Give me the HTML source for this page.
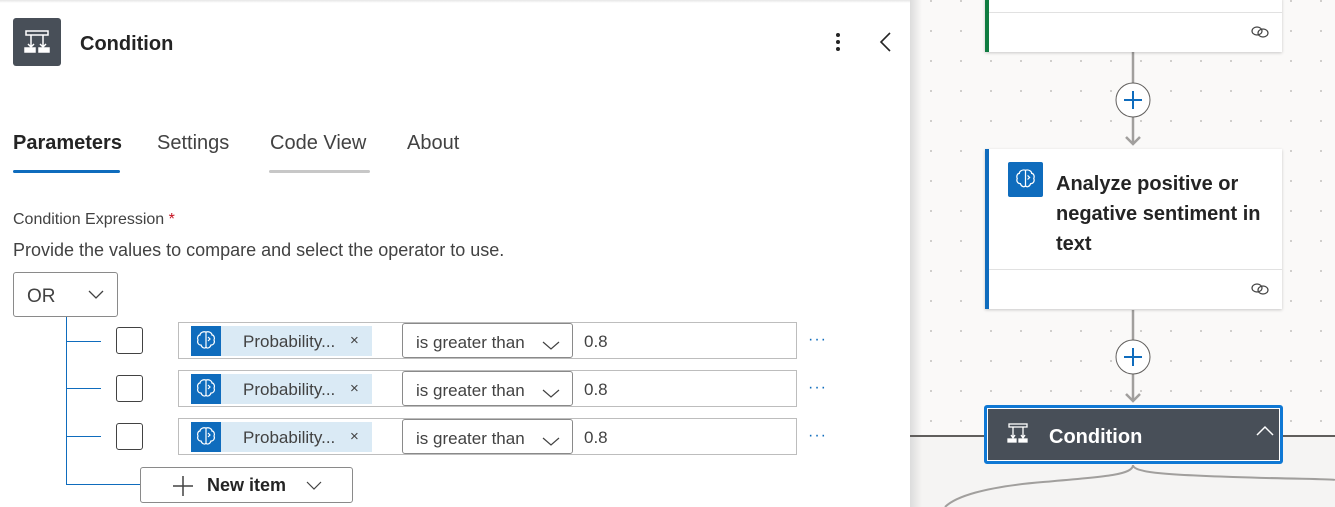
<!DOCTYPE html>
<html><head><meta charset="utf-8"><style>
*{box-sizing:border-box;margin:0;padding:0}
body{width:1335px;height:507px;overflow:hidden;position:relative;background:#fff;font-family:"Segoe UI","Liberation Sans",sans-serif;color:#242424}
.a{position:absolute}
.t{white-space:nowrap}
.row{position:absolute;left:178px;width:619px;height:37px;border:1px solid #bdbdbd;background:#fff}
.tok{position:absolute;left:12px;top:3px;width:181px;height:30px;background:#daeaf5}
.tok .ic{position:absolute;left:0;top:0;width:30px;height:30px;background:#0f6cbd}
.tok span{position:absolute;left:52px;top:6px;font-size:17px;color:#424242}
.tok b{position:absolute;left:159px;top:6px;font-weight:normal;font-size:15px;color:#424242}
.op{position:absolute;left:223px;top:0;width:171px;height:35px;border:1px solid #8a8a8a;border-radius:3px;background:#fff}
.op span{position:absolute;left:13px;top:9px;font-size:17px;color:#424242}
.val{position:absolute;left:405px;top:9px;font-size:17px;color:#424242}
.cb{position:absolute;left:116px;width:27px;height:27px;border:1px solid #424242;border-radius:3px}
.hl{position:absolute;left:66px;width:35px;height:1px;background:#0f6cbd}
.dots{position:absolute;left:808px;font-size:16px;color:#0f6cbd;letter-spacing:1px}
</style></head><body>
<div class="a" style="left:0;top:0;width:910px;height:3px;background:linear-gradient(#e6e6e6,#fff)"></div>
<div class="a" style="left:13px;top:18px;width:48px;height:48px;background:#484f58;border-radius:3px">
<svg width="48" height="48" viewBox="0 0 48 48" fill="none" stroke="#fff" stroke-width="1.5"><rect x="13" y="13" width="22" height="4"/><path d="M18 17v12M15 26l3 3 3-3M30 17v12M27 26l3 3 3-3"/><rect x="12" y="30" width="10" height="4" fill="#fff"/><rect x="26" y="30" width="10" height="4" fill="#fff"/></svg></div>
<div class="a t" style="left:80px;top:33px;font-size:20px;font-weight:600">Condition</div>
<div class="a" style="left:836px;top:33px;width:4px;height:20px"><div style="width:4px;height:4px;background:#242424;border-radius:2px;margin-bottom:3px"></div><div style="width:4px;height:4px;background:#242424;border-radius:2px;margin-bottom:3px"></div><div style="width:4px;height:4px;background:#242424;border-radius:2px"></div></div>
<svg class="a" style="left:876px;top:30px" width="20" height="24"><path d="M14 3L5 12l9 9" fill="none" stroke="#242424" stroke-width="1.6"/></svg>
<div class="a t" style="left:13px;top:132px;font-size:20px;font-weight:600">Parameters</div>
<div class="a" style="left:13px;top:170px;width:107px;height:3px;background:#0f6cbd;border-radius:2px"></div>
<div class="a t" style="left:157px;top:132px;font-size:20px;color:#424242">Settings</div>
<div class="a t" style="left:270px;top:132px;font-size:20px;color:#424242">Code View</div>
<div class="a" style="left:269px;top:170px;width:101px;height:3px;background:#c7c7c7;border-radius:2px"></div>
<div class="a t" style="left:407px;top:132px;font-size:20px;color:#424242">About</div>
<div class="a t" style="left:13px;top:211px;font-size:16px;color:#424242">Condition Expression <span style="color:#c50f1f">*</span></div>
<div class="a t" style="left:13px;top:240px;font-size:18px;color:#424242">Provide the values to compare and select the operator to use.</div>
<div class="a" style="left:13px;top:272px;width:105px;height:45px;border:1px solid #8a8a8a;border-radius:3px"><span class="a t" style="left:13px;top:13px;font-size:19px;color:#424242">OR</span>
<svg class="a" style="left:73px;top:16px" width="18" height="12"><path d="M2 2l7 7 7-7" fill="none" stroke="#424242" stroke-width="1.3"/></svg></div>
<div class="a" style="left:66px;top:317px;width:1px;height:168px;background:#0f6cbd"></div>
<div class="hl" style="top:341px"></div><div class="hl" style="top:388px"></div><div class="hl" style="top:436px"></div>
<div class="a" style="left:66px;top:484px;width:74px;height:1px;background:#0f6cbd"></div>
<div class="cb" style="top:327px"></div><div class="cb" style="top:375px"></div><div class="cb" style="top:423px"></div>
<svg width="0" height="0" style="position:absolute"><defs><g id="br" fill="none" stroke="#fff" stroke-width="1.2"><path d="M15 6c-3-1-6 1-6 3-2 0-3 3-2 5-1 2 0 5 3 5 1 3 4 4 5 2zM15 6c3-1 6 1 6 3 2 0 3 3 2 5 1 2 0 5-3 5-1 3-4 4-5 2M15 6v15M17 11l2 2-2 2"/></g></defs></svg>
<div class="row" style="top:322px"><div class="tok"><div class="ic"><svg width="30" height="30"><use href="#br"/></svg></div><span class="t">Probability...</span><b>×</b></div><div class="op"><span class="t">is greater than</span><svg class="a" style="left:138px;top:15px" width="20" height="12"><path d="M2 3l8 7 8-7" fill="none" stroke="#424242" stroke-width="1.2"/></svg></div><span class="val t">0.8</span></div>
<div class="row" style="top:370px"><div class="tok"><div class="ic"><svg width="30" height="30"><use href="#br"/></svg></div><span class="t">Probability...</span><b>×</b></div><div class="op"><span class="t">is greater than</span><svg class="a" style="left:138px;top:15px" width="20" height="12"><path d="M2 3l8 7 8-7" fill="none" stroke="#424242" stroke-width="1.2"/></svg></div><span class="val t">0.8</span></div>
<div class="row" style="top:418px"><div class="tok"><div class="ic"><svg width="30" height="30"><use href="#br"/></svg></div><span class="t">Probability...</span><b>×</b></div><div class="op"><span class="t">is greater than</span><svg class="a" style="left:138px;top:15px" width="20" height="12"><path d="M2 3l8 7 8-7" fill="none" stroke="#424242" stroke-width="1.2"/></svg></div><span class="val t">0.8</span></div>
<div class="dots t" style="top:331px">···</div><div class="dots t" style="top:379px">···</div><div class="dots t" style="top:427px">···</div>
<div class="a" style="left:140px;top:467px;width:213px;height:36px;border:1px solid #8a8a8a;border-radius:3px">
<svg class="a" style="left:30px;top:7px" width="24" height="22"><path d="M12 1v20M2 11h20" stroke="#424242" stroke-width="1.5"/></svg>
<span class="a t" style="left:66px;top:7px;font-size:18px;font-weight:600">New item</span>
<svg class="a" style="left:164px;top:12px" width="18" height="12"><path d="M2 2l7 7 7-7" fill="none" stroke="#424242" stroke-width="1.2"/></svg></div>
<div class="a" style="left:910px;top:0;width:425px;height:507px;background-color:#faf9f8;background-image:radial-gradient(circle,#c8c6c4 0.8px,transparent 1.2px);background-size:30px 30px;background-position:6px 16px"></div>
<div class="a" style="left:910px;top:437px;width:425px;height:70px;background:#f5f4f3"></div>
<div class="a" style="left:910px;top:0;width:12px;height:507px;background:linear-gradient(90deg,#dcdcdc,rgba(240,240,240,0))"></div>
<div class="a" style="left:910px;top:435px;width:425px;height:2px;background:#605e5c"></div>
<svg class="a" style="left:910px;top:0" width="425" height="507" fill="none">
<path d="M223 52v31M223 117v27M216 137l7 7 7-7M223 310v30M223 374v27M216 394l7 7 7-7" stroke="#a19f9d" stroke-width="2.5"/>
<circle cx="223" cy="100" r="17" fill="#fff" stroke="#605e5c"/><path d="M223 91v18M214 100h18" stroke="#0f6cbd" stroke-width="2"/>
<circle cx="223" cy="357" r="17" fill="#fff" stroke="#605e5c"/><path d="M223 348v18M214 357h18" stroke="#0f6cbd" stroke-width="2"/>
<path d="M223 465c0 10-30 12-90 17S45 497 35 507M223 465c0 8 40 10 100 12s100 2 102 3" stroke="#a19f9d" stroke-width="2"/>
</svg>
<div class="a" style="left:985px;top:-2px;width:297px;height:54px;background:#fff;border-left:4px solid #107c41;box-shadow:0 1px 3px rgba(0,0,0,.2)"><div style="position:absolute;left:0;right:0;top:14px;height:1px;background:#e1e1e1"></div></div>
<div class="a" style="left:985px;top:149px;width:297px;height:160px;background:#fff;border-left:4px solid #0f6cbd;box-shadow:0 1px 3px rgba(0,0,0,.2)">
<div class="a" style="left:19px;top:13px;width:35px;height:35px;background:#0f6cbd;border-radius:2px"><svg width="35" height="35" viewBox="-2 -2 34 34"><use href="#br"/></svg></div>
<div class="a" style="left:67px;top:20px;font-size:20px;font-weight:600;line-height:30px;width:225px">Analyze positive or negative sentiment in text</div>
<div class="a" style="left:0;right:0;top:120px;height:1px;background:#e1e1e1"></div></div>
<svg class="a" style="left:1250px;top:24px" width="20" height="16"><g fill="none" stroke="#424242" stroke-width="1.2"><ellipse cx="7" cy="7" rx="5" ry="4"/><ellipse cx="13" cy="9" rx="5" ry="4"/></g></svg>
<svg class="a" style="left:1250px;top:281px" width="20" height="16"><g fill="none" stroke="#424242" stroke-width="1.2"><ellipse cx="7" cy="7" rx="5" ry="4"/><ellipse cx="13" cy="9" rx="5" ry="4"/></g></svg>
<div class="a" style="left:984px;top:405px;width:299px;height:59px;background:#484f58;border:3px solid #0f78d4;border-radius:3px;box-shadow:inset 0 0 0 1px #fff">
<svg class="a" style="left:20px;top:14px" width="24" height="24" viewBox="0 0 24 24" fill="none" stroke="#fff" stroke-width="1.3"><rect x="2" y="2" width="18" height="3"/><path d="M6 5v11M4 13l2 3 2-3M16 5v11M14 13l2 3 2-3"/><rect x="1" y="17" width="8" height="3" fill="#fff"/><rect x="12" y="17" width="8" height="3" fill="#fff"/></svg>
<span class="a t" style="left:62px;top:18px;font-size:20px;font-weight:600;color:#fff">Condition</span>
<svg class="a" style="left:268px;top:16px" width="20" height="14"><path d="M2 11l8-8 8 8" fill="none" stroke="#fff" stroke-width="1.5"/></svg></div>
</body></html>
